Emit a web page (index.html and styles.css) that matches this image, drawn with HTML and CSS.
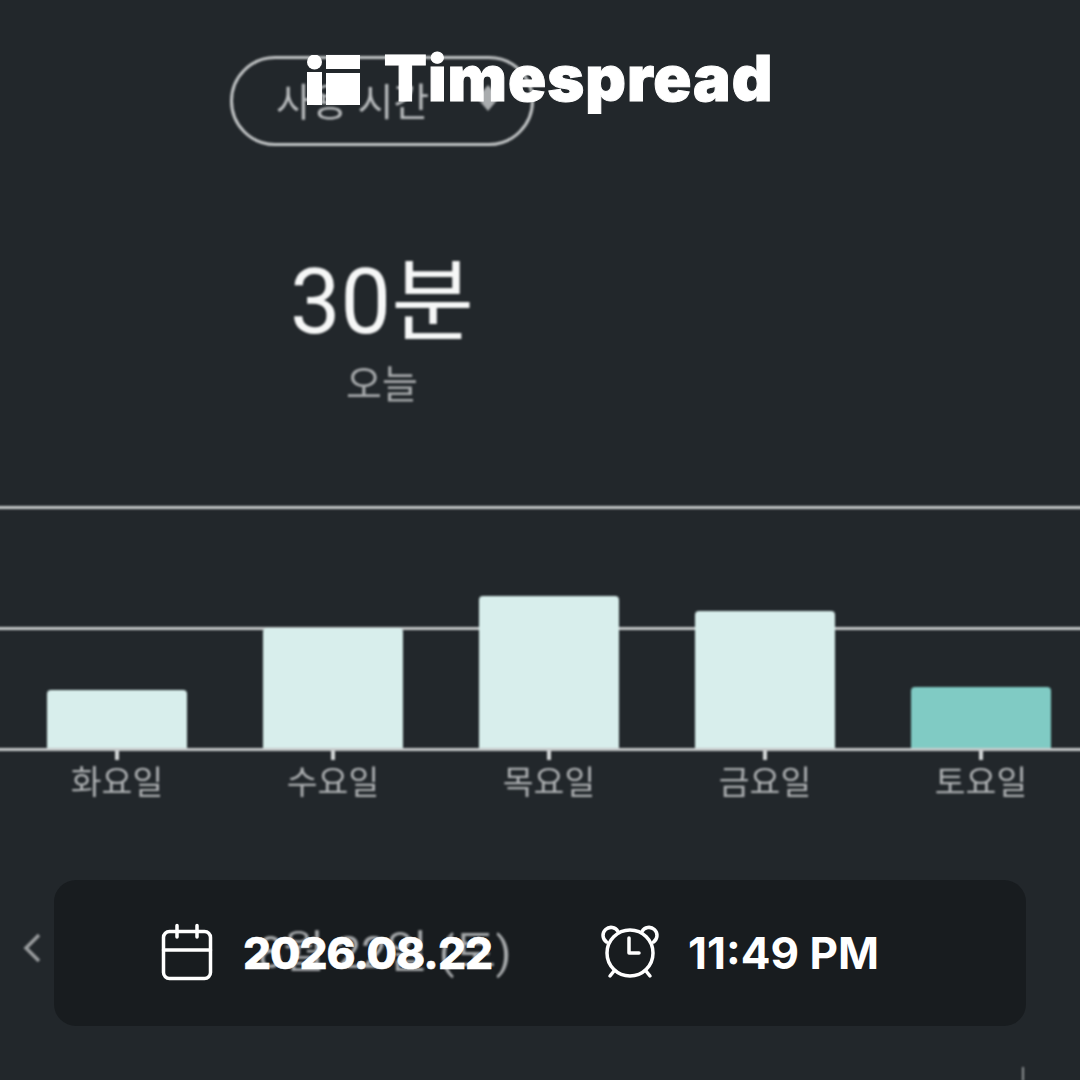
FILE: index.html
```html
<!DOCTYPE html>
<html lang="ko">
<head>
    <meta charset="UTF-8">
    <meta name="viewport" content="width=device-width, initial-scale=1.0">
    <title>Timespread</title>
    <link rel="stylesheet" href="styles.css">
</head>
<body>

    <div class="screen">
        <div class="summary">
            <div class="picker">
                <span class="picker-label">사용 시간</span>
                <span class="picker-arrows"><i class="arrow-up"></i><i class="arrow-down"></i></span>
            </div>
            <div class="total">30분</div>
            <div class="total-label">오늘</div>
        </div>

        <div class="chart">
            <div class="plot">
                <div class="grid-row"></div>
                <div class="grid-row grid-row-low"></div>
                <div class="bars">
                    <div class="bar-col"><div class="bar" style="height: 58px"></div></div>
                    <div class="bar-col"><div class="bar" style="height: 120px"></div></div>
                    <div class="bar-col"><div class="bar" style="height: 152px"></div></div>
                    <div class="bar-col"><div class="bar" style="height: 137px"></div></div>
                    <div class="bar-col"><div class="bar bar-today" style="height: 61px"></div></div>
                </div>
            </div>
            <div class="days">
                <div class="day">화요일</div>
                <div class="day">수요일</div>
                <div class="day">목요일</div>
                <div class="day">금요일</div>
                <div class="day">토요일</div>
            </div>
        </div>

        <div class="date-nav">
            <svg class="chevron" width="20" height="32" viewBox="0 0 20 32">
                <path d="M17 3 L4 16 L17 29" />
            </svg>
        </div>
        <div class="next-tick"></div>
    </div>

    <!-- watermark on top of the screenshot -->
    <div class="brand">
        <svg class="brand-logo" width="53" height="50" viewBox="0 0 53 50">
            <circle cx="7.5" cy="7" r="7.5" />
            <rect x="0" y="17" width="15" height="33" />
            <rect x="19" y="0" width="34" height="14" />
            <rect x="19" y="18" width="34" height="32" />
        </svg>
        <span class="brand-name">Timespread</span>
    </div>

    <div class="stamp">
        <span class="stamp-under">8월 22일 (토)</span>
        <svg class="stamp-icon" width="56" height="60" viewBox="0 0 56 60">
            <rect x="3.5" y="8.5" width="47" height="47" rx="6" />
            <path d="M3.5 27 H50.5 M17 2.5 V14 M37 2.5 V14" />
        </svg>
        <span class="stamp-date">2026.08.22</span>
        <svg class="stamp-icon stamp-clock" width="60" height="60" viewBox="0 0 60 60">
            <circle cx="30" cy="30" r="23" />
            <path d="M6.5 19 A8 8 0 1 1 18 8.5" />
            <path d="M53.5 19 A8 8 0 1 0 42 8.5" />
            <path d="M14 48 L10 53 M46 48 L50 53" />
            <path d="M29 15 V30 H39" />
        </svg>
        <span class="stamp-time">11:49 PM</span>
    </div>

</body>
</html>
```

FILE: styles.css
```css
/* General Styles */
body {
    margin: 0;
    width: 1080px;
    height: 1080px;
    position: relative;
    overflow: hidden;
    background-color: #22272b;
    font-family: Roboto, 'Noto Sans CJK KR', sans-serif;
}

/* the blurry phone capture underneath */
.screen {
    filter: blur(0.8px);
}

.summary {
    width: 304px;
    margin-left: 230px;
    padding-top: 56px;
    text-align: center;
}

.picker {
    height: 84px;
    border: 3px solid #c3c6c7;
    border-radius: 46px;
    display: flex;
    align-items: center;
    padding-left: 43px;
    padding-right: 32px;
    justify-content: space-between;
}

.picker-label {
    font-size: 39px;
    white-space: nowrap;
    padding-bottom: 5px;
    color: #b9bcbe;
}

.picker-arrows {
    display: flex;
    flex-direction: column;
    margin-top: -6px;
}

.arrow-up, .arrow-down {
    width: 0;
    height: 0;
    border-left: 11px solid transparent;
    border-right: 11px solid transparent;
}

.arrow-up {
    border-bottom: 13px solid #a9acae;
}

.arrow-down {
    border-top: 13px solid #a9acae;
}

.total {
    margin-top: 107px;
    font-size: 90px;
    line-height: 100px;
    color: #f6f7f7;
}

.total-label {
    margin-top: 10px;
    font-size: 39px;
    line-height: 44px;
    color: #a6a9ab;
}

.chart {
    margin-top: 99px;
}

/* runs a little past the window so the blur doesn't fade the line ends */
.plot {
    display: grid;
    grid-template-rows: 121px 121px;
    margin: 0 -4px;
    border-bottom: 3px solid #c7cacb;
}

.grid-row {
    grid-column: 1;
    grid-row: 1;
    border-top: 3px solid #c7cacb;
}

.grid-row-low {
    grid-row: 2;
}

.bars {
    grid-column: 1;
    grid-row: 1 / 3;
    display: grid;
    grid-template-columns: repeat(5, 216px);
    padding-left: 13px;
    align-items: end;
}

.bar-col {
    display: flex;
    justify-content: center;
}

.bar {
    width: 140px;
    background-color: #d8eeec;
    border-radius: 4px 4px 0 0;
}

.bar-today {
    background-color: #80cbc4;
}

.days {
    display: grid;
    grid-template-columns: repeat(5, 216px);
    padding-left: 9px;
}

.day {
    text-align: center;
    font-size: 33.5px;
    line-height: 44px;
    color: #adb0b2;
    padding-top: 10px;
    position: relative;
}

.day::before {
    content: "";
    position: absolute;
    top: 0;
    left: 106px;
    width: 4px;
    height: 9px;
    background-color: #d5d8d9;
}

.date-nav {
    margin-top: 113px;
    height: 60px;
    display: flex;
    align-items: center;
    padding-left: 22px;
}

.chevron {
    fill: none;
    stroke: #9b9ea0;
    stroke-width: 3.5;
}

.next-tick {
    width: 2px;
    height: 14px;
    margin-top: 89px;
    margin-left: 1022px;
    background-color: #8d9093;
}

.brand {
    position: absolute;
    top: 46px;
    left: 0;
    right: 0;
    display: flex;
    justify-content: center;
    align-items: flex-start;
    gap: 24px;
    color: #ffffff;
}

.brand-logo {
    margin-top: 9px;
    fill: #ffffff;
}

.brand-name {
    font-family: Inter, sans-serif;
    font-size: 63px;
    line-height: 64px;
    font-weight: 900;
    letter-spacing: 1px;
    -webkit-text-stroke: 1px #ffffff;
}

.stamp {
    position: absolute;
    top: 880px;
    left: 54px;
    width: 972px;
    height: 146px;
    box-sizing: border-box;
    padding-left: 106px;
    border-radius: 22px;
    background-color: #181c1f;
    display: flex;
    align-items: center;
    color: #ffffff;
    font-family: Inter, sans-serif;
    font-size: 44px;
}

/* the app's own date, showing through the stamp */
.stamp-under {
    position: absolute;
    left: 204px;
    top: 44px;
    font-family: Roboto, 'Noto Sans CJK KR', sans-serif;
    font-size: 45px;
    line-height: 58px;
    white-space: nowrap;
    color: #a6a9ab;
    filter: blur(0.8px);
}

.stamp-icon {
    flex: none;
    position: relative;
    fill: none;
    stroke: #ffffff;
    stroke-width: 3.5;
    stroke-linecap: round;
    stroke-linejoin: round;
}

.stamp-date {
    position: relative;
    margin-left: 27px;
    font-weight: 800;
    letter-spacing: -1px;
    -webkit-text-stroke: 0.5px #ffffff;
}

.stamp-clock {
    margin-left: 108px;
}

.stamp-time {
    margin-left: 28px;
    font-weight: 700;
    letter-spacing: 0;
}
```
